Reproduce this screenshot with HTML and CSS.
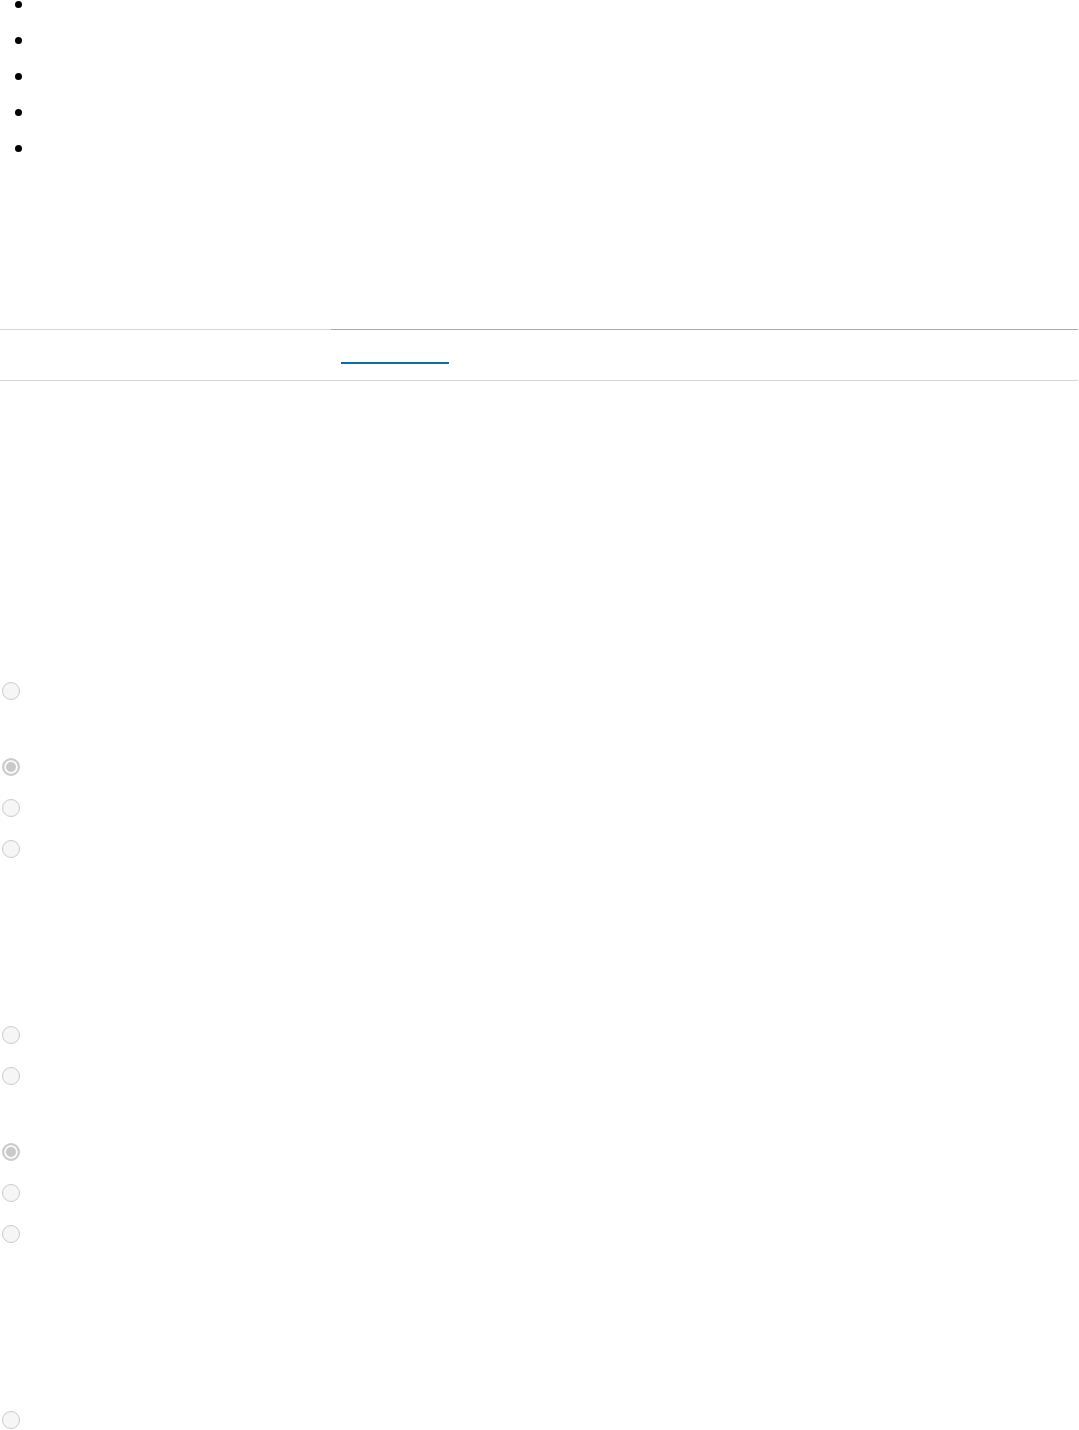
FILE: index.html
```html
<!DOCTYPE html>
<html lang="en">
<head>
    <meta charset="UTF-8" />
    <title>Settings</title>
    <link rel="stylesheet" href="styles.css">
</head>
<body>
    <ul class="bullets">
        <li></li>
        <li></li>
        <li></li>
        <li></li>
        <li></li>
    </ul>

    <div class="tabs">
        <div class="tabs-side"></div>
        <div class="tabs-main">
            <a class="tab active" href="#"></a>
        </div>
    </div>

    <!-- Primeiro grupo de opções -->
    <div class="section">
        <div class="group">
            <div class="option"><input class="radio" type="radio" name="a1" disabled></div>
        </div>
        <div class="group">
            <div class="option"><input class="radio" type="radio" name="a2" checked disabled></div>
            <div class="option"><input class="radio" type="radio" name="a2" disabled></div>
            <div class="option"><input class="radio" type="radio" name="a2" disabled></div>
        </div>
    </div>

    <div class="section">
        <div class="group">
            <div class="option"><input class="radio" type="radio" name="b1" disabled></div>
            <div class="option"><input class="radio" type="radio" name="b1" disabled></div>
        </div>
        <div class="group">
            <div class="option"><input class="radio" type="radio" name="b2" checked disabled></div>
            <div class="option"><input class="radio" type="radio" name="b2" disabled></div>
            <div class="option"><input class="radio" type="radio" name="b2" disabled></div>
        </div>
    </div>

    <div class="section">
        <div class="group">
            <div class="option"><input class="radio" type="radio" name="c1" disabled></div>
        </div>
    </div>
</body>
</html>
```

FILE: styles.css
```css
/* Estilos gerais */
body {
    font-family: "Liberation Sans", Arial, sans-serif;
    background-color: #fff;
    margin: 0;
    padding: 0;
    overflow: hidden;
}

/* Lista */
.bullets {
    list-style: none;
    margin: 0;
    padding: 0;
}

.bullets li {
    height: 36px;
    display: flex;
    align-items: flex-start;
}

.bullets li::before {
    content: "";
    width: 7px;
    height: 7px;
    margin: 1px 0 0 15px;
    border-radius: 50%;
    background-color: #000;
}

/* Abas */
.tabs {
    display: flex;
    margin: 149px 1px 0 0;
    border-bottom: 1px solid #d3d6d9;
}

.tabs-side {
    width: 331px;
    border-top: 1px solid #d5d5d5;
}

.tabs-main {
    flex: 1;
    border-top: 1px solid #a9acae;
    height: 50px;
}

.tab {
    display: block;
    width: 108px;
    height: 32px;
    margin-left: 10px;
    border-bottom: 2px solid #0a6fa6;
}

/* Opções */
.section {
    display: flex;
    flex-direction: column;
    margin-top: 145px;
}

.tabs + .section {
    margin-top: 301px;
}

.group {
    display: flex;
    flex-direction: column;
}

.group + .group {
    margin-top: 35px;
}

.option {
    display: flex;
    align-items: center;
    height: 18px;
    margin-bottom: 23px;
}

.radio {
    appearance: none;
    width: 18px;
    height: 18px;
    margin: 0 0 0 2px;
    border: 1px solid #cbcbcb;
    border-radius: 50%;
    background-color: #f6f6f6;
    box-sizing: border-box;
}

.radio:checked {
    border: 2px solid #cbcbcb;
    background-color: #c9c9c9;
    box-shadow: inset 0 0 0 2px #fafafa;
}
```
